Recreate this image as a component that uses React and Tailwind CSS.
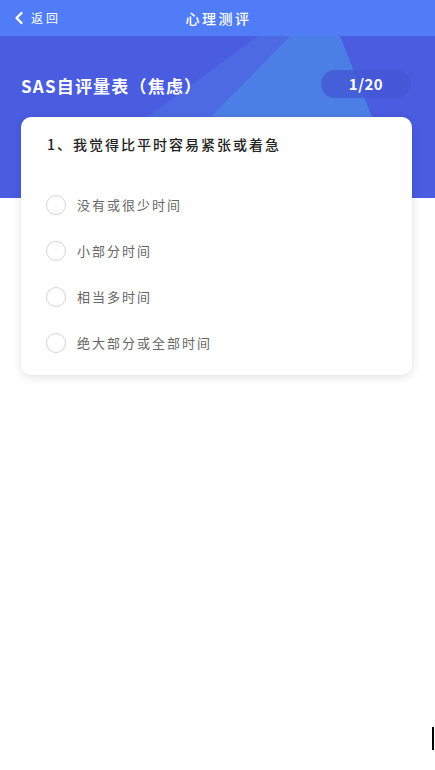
import React, { useState } from 'react';

const OPTIONS = ['没有或很少时间', '小部分时间', '相当多时间', '绝大部分或全部时间'];

const FONT = { fontFamily: '"Noto Sans CJK SC", "Noto Sans", sans-serif' };

export default function App() {
  const [selected, setSelected] = useState(null);

  return (
    <div className="relative w-[435px] h-[770px] bg-white overflow-hidden" style={FONT}>
      {/* 顶部导航 */}
      <div className="relative h-[36px] bg-[#507cf8] flex items-center justify-center text-white">
        <div className="absolute left-[13px] top-0 h-full flex items-center gap-[6px]">
          <svg width="12" height="14" viewBox="0 0 12 14" fill="none">
            <path d="M8.5 2 L3.5 7 L8.5 12" stroke="white" strokeWidth="2.4" strokeLinecap="round" strokeLinejoin="round" />
          </svg>
          <span className="text-[12px] tracking-[3px]">返回</span>
        </div>
        <span className="text-[14px] font-medium tracking-[2.5px] pl-[2px]">心理测评</span>
      </div>

      {/* 蓝色背景区 */}
      <div className="relative h-[162px] bg-[#4a5ce0] overflow-hidden">
        <div className="absolute inset-0 bg-[#4d6ae2] [clip-path:polygon(258px_0,290px_0,131px_162px,37px_162px)]" />
        <div className="absolute inset-0 bg-[#4c7fe5] [clip-path:polygon(290px_0,340px_0,404px_162px,131px_162px)]" />
        <div className="relative flex items-center justify-between pl-[21px] pr-[24px] pt-[34px]">
          <span className="text-white text-[17px] font-bold tracking-[1.2px] pt-[3px]">SAS自评量表（焦虑）</span>
          <span className="w-[90px] h-[28px] rounded-full bg-[#4458d4]/80 flex items-center justify-center text-white text-[15px] font-bold tracking-[0.5px]">1/20</span>
        </div>
      </div>

      {/* 题目卡片 */}
      <div className="absolute left-[21px] top-[117px] w-[391px] bg-white rounded-[10px] shadow-[0_2px_10px_rgba(0,0,0,0.12)] pt-[17px] pb-[22px]">
        <div className="pl-[26px] text-[14px] font-medium tracking-[2px] text-[#222]">1、我觉得比平时容易紧张或着急</div>
        <div className="mt-[40px] flex flex-col gap-[26px] pl-[25px]">
          {OPTIONS.map((opt, i) => (
            <button
              key={opt}
              onClick={() => setSelected(i)}
              className="flex items-center gap-[11px] h-[20px] text-left"
            >
              <span
                className={`w-[20px] h-[20px] rounded-full border ${
                  selected === i ? 'border-[#4a5de0] bg-[#4a5de0]' : 'border-[#d4d4d4]'
                }`}
              />
              <span className="text-[13px] tracking-[2px] text-[#666]">{opt}</span>
            </button>
          ))}
        </div>
      </div>

      <div className="absolute left-[432px] top-[727px] w-[2px] h-[23px] bg-black" />
    </div>
  );
}
